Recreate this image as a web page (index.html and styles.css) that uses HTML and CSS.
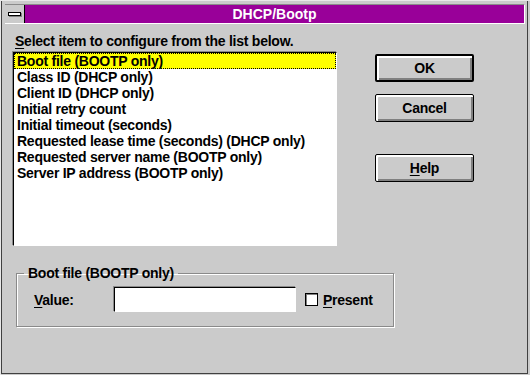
FILE: index.html
```html
<!DOCTYPE html>
<html lang="en">
<head>
  <meta charset="UTF-8">
  <title>DHCP/Bootp</title>
  <link rel="stylesheet" href="styles.css">
</head>
<body>
  <div class="window">
    <div class="frame">
      <div class="titlebar">
        <div class="sysmenu"><span class="dash"></span></div>
        <div class="title">DHCP/Bootp</div>
      </div>

      <div class="client">
        <div class="top">
          <div class="left">
            <div class="caption"><u>S</u>elect item to configure from the list below.</div>
            <ul class="listbox">
              <li class="selected"><span>Boot file (BOOTP only)</span></li>
              <li><span>Class ID (DHCP only)</span></li>
              <li><span>Client ID (DHCP only)</span></li>
              <li><span>Initial retry count</span></li>
              <li><span>Initial timeout (seconds)</span></li>
              <li><span>Requested lease time (seconds) (DHCP only)</span></li>
              <li><span>Requested server name (BOOTP only)</span></li>
              <li><span>Server IP address (BOOTP only)</span></li>
            </ul>
          </div>

          <div class="buttons">
            <button class="btn default">OK</button>
            <button class="btn">Cancel</button>
            <button class="btn help"><u>H</u>elp</button>
          </div>
        </div>

        <fieldset class="group">
          <legend>Boot file (BOOTP only)</legend>
          <div class="value-row">
            <span class="value-label"><u>V</u>alue:</span>
            <span class="textbox"></span>
            <span class="checkbox"></span>
            <span class="check-label"><u>P</u>resent</span>
          </div>
        </fieldset>
      </div>
    </div>
  </div>
</body>
</html>
```

FILE: styles.css
```css
/* Reset */
* {
  margin: 0;
  padding: 0;
  box-sizing: border-box;
}

body {
  font-family: 'Liberation Sans', Arial, sans-serif;
  font-size: 14px;
  letter-spacing: -0.25px;
  font-weight: bold;
  color: #000;
  background: #cbcbcb;
  width: 530px;
  height: 375px;
  overflow: hidden;
}

/* Window frame */
.window {
  width: 530px;
  height: 375px;
  border-top: 1px solid #e8e8e8;
  border-left: 1px solid #e8e8e8;
  padding: 0 2px 1px 0;
}

.frame {
  height: 100%;
  border-left: 1px solid #404040;
  border-right: 1px solid #404040;
  border-bottom: 1px solid #404040;
  padding: 3px 2px 0 3px;
}

/* Title bar */
.titlebar {
  display: flex;
  height: 20px;
  border-top: 1px solid #8a8a8a;
  border-right: 1px solid #fff;
  border-bottom: 1px solid #fff;
}

.sysmenu {
  width: 20px;
  background: #cbcbcb;
  border-right: 1px solid #000;
  display: flex;
  align-items: center;
  justify-content: center;
}

.dash {
  width: 13px;
  height: 4px;
  background: #fff;
  border: 1px solid #000;
  box-shadow: 1px 1px 0 #808080;
}

.title {
  flex: 1;
  background: #990099;
  color: #fff;
  text-align: center;
  line-height: 18px;
  letter-spacing: 0;
}

/* Client area */
.client {
  padding: 10px 0 0 8px;
}

.top {
  display: flex;
}

.caption {
  padding-left: 2px;
  line-height: 14px;
  margin-bottom: 4px;
}

.caption u,
.btn u,
.value-label u,
.check-label u {
  text-decoration-thickness: 1px;
  text-underline-offset: 2px;
}

.listbox {
  list-style: none;
  width: 324px;
  height: 194px;
  background: #fff;
  border-top: 1px solid #000;
  border-left: 1px solid #000;
  border-right: 1px solid #fff;
  border-bottom: 1px solid #fff;
  box-shadow: -1px -1px 0 #8a8a8a;
  padding: 0;
}

.listbox li {
  height: 16px;
  line-height: 16px;
  padding-left: 3px;
  white-space: nowrap;
}

.listbox li.selected {
  background: #ffff00;
  outline: 1px dotted #000;
  outline-offset: -1px;
}

/* Buttons */
.buttons {
  display: flex;
  flex-direction: column;
  margin-left: 38px;
  padding-top: 20px;
  gap: 12px;
}

.btn {
  width: 99px;
  height: 28px;
  font: inherit;
  letter-spacing: inherit;
  color: #000;
  background: #cbcbcb;
  border: 1px solid #000;
  border-radius: 2px;
  box-shadow: inset 1px 1px 0 #fff, inset 2px 2px 0 #fff, inset -1px -1px 0 #808080, inset -2px -2px 0 #808080;
}

.btn.default {
  border-width: 2px;
}

.btn.help {
  margin-top: 20px;
}

/* Group box */
.group {
  width: 378px;
  margin: 20px 0 0 3px;
  height: 61px;
  border: 1px solid #8a8a8a;
  box-shadow: inset 1px 1px 0 #fff, 1px 1px 0 #fff;
  padding: 0 0 0 17px;
}

.group legend {
  padding: 0 4px;
  margin-left: -10px;
  line-height: 14px;
}

.value-row {
  display: flex;
  align-items: center;
  margin-top: 7px;
}

.value-label {
  width: 80px;
}

.textbox {
  width: 182px;
  height: 25px;
  background: #fff;
  border-top: 1px solid #000;
  border-left: 1px solid #000;
  border-right: 1px solid #fff;
  border-bottom: 1px solid #fff;
  box-shadow: -1px -1px 0 #8a8a8a;
}

.checkbox {
  width: 13px;
  height: 13px;
  margin-left: 9px;
  background: #fff;
  border: 1px solid #000;
  box-shadow: inset 1px 1px 0 #808080;
}

.check-label {
  margin-left: 5px;
}
```
